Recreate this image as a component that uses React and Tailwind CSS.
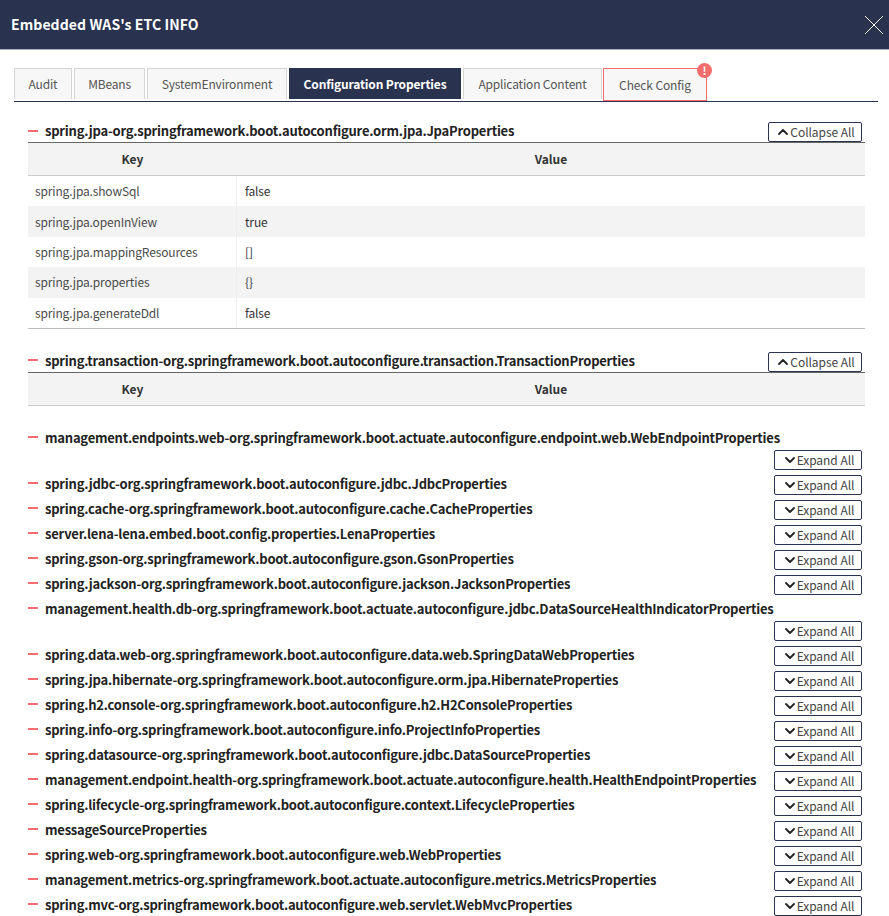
import React from 'react';
import { ChevronDown, ChevronUp } from 'lucide-react';

const tabs = [
    { label: 'Audit', width: 'w-[58px]' },
    { label: 'MBeans', width: 'w-[71px]' },
    { label: 'SystemEnvironment', width: 'w-[140px]' },
    { label: 'Configuration Properties', width: 'w-[172px]', active: true },
    { label: 'Application Content', width: 'w-[139px]' },
];

const jpaRows = [
    ['spring.jpa.showSql', 'false'],
    ['spring.jpa.openInView', 'true'],
    ['spring.jpa.mappingResources', '[]'],
    ['spring.jpa.properties', '{}'],
    ['spring.jpa.generateDdl', 'false'],
];

const collapsed = [
    'management.endpoints.web-org.springframework.boot.actuate.autoconfigure.endpoint.web.WebEndpointProperties',
    'spring.jdbc-org.springframework.boot.autoconfigure.jdbc.JdbcProperties',
    'spring.cache-org.springframework.boot.autoconfigure.cache.CacheProperties',
    'server.lena-lena.embed.boot.config.properties.LenaProperties',
    'spring.gson-org.springframework.boot.autoconfigure.gson.GsonProperties',
    'spring.jackson-org.springframework.boot.autoconfigure.jackson.JacksonProperties',
    'management.health.db-org.springframework.boot.actuate.autoconfigure.jdbc.DataSourceHealthIndicatorProperties',
    'spring.data.web-org.springframework.boot.autoconfigure.data.web.SpringDataWebProperties',
    'spring.jpa.hibernate-org.springframework.boot.autoconfigure.orm.jpa.HibernateProperties',
    'spring.h2.console-org.springframework.boot.autoconfigure.h2.H2ConsoleProperties',
    'spring.info-org.springframework.boot.autoconfigure.info.ProjectInfoProperties',
    'spring.datasource-org.springframework.boot.autoconfigure.jdbc.DataSourceProperties',
    'management.endpoint.health-org.springframework.boot.actuate.autoconfigure.health.HealthEndpointProperties',
    'spring.lifecycle-org.springframework.boot.autoconfigure.context.LifecycleProperties',
    'messageSourceProperties',
    'spring.web-org.springframework.boot.autoconfigure.web.WebProperties',
    'management.metrics-org.springframework.boot.actuate.autoconfigure.metrics.MetricsProperties',
    'spring.mvc-org.springframework.boot.autoconfigure.web.servlet.WebMvcProperties',
];

const SectionHead = ({ title, open }) => (
    <div className="flex flex-wrap items-start justify-between pr-[3px]">
        <h3 className="mr-[4px] flex h-[21px] items-center text-[13px] font-bold tracking-[-0.22px] text-[#222]">
            <span className="mr-[7px] h-[2px] w-[10px] bg-[#f56c6c]" />
            {title}
        </h3>
        <button
            className={`relative z-10 ml-auto flex h-[20px] items-center justify-center rounded-[2px] border border-[#2a3350] bg-white text-[12px] tracking-[-0.05px] text-[#444] ${open ? 'mt-[2px] w-[94px]' : 'mt-[2.5px] w-[88px]'}`}
        >
            {open ? (
                <ChevronUp size={16} strokeWidth={2.75} color="#222" className="-mr-[1px]" />
            ) : (
                <ChevronDown size={16} strokeWidth={2.75} color="#222" className="-mr-[1px]" />
            )}
            {open ? 'Collapse All' : 'Expand All'}
        </button>
    </div>
);

const TableHead = () => (
    <div className="flex h-[34px] items-center border-t border-b border-t-[#666] border-b-[#ccc] bg-[#f3f3f3] text-[12px] font-bold text-[#333]">
        <div className="w-[209px] text-center">Key</div>
        <div className="flex-1 text-center">Value</div>
    </div>
);

const App = () => {
    return (
        <div className="w-[889px] h-[916px] overflow-hidden bg-white font-['Noto_Sans_CJK_KR','Noto_Sans',sans-serif]">
            <header className="flex h-[50px] items-center justify-between border-b border-[#aab] bg-[#29324f] pl-[11px] pr-[5px]">
                <h1 className="text-[14px] font-bold tracking-[0.09px] text-white">Embedded WAS's ETC INFO</h1>
                <svg width="20" height="20" viewBox="0 0 20 20" className="mt-[1px]" stroke="white" strokeWidth="1" fill="none">
                    <path d="M1 1 L19 19 M19 1 L1 19" />
                </svg>
            </header>

            <div className="pl-[14px] pr-[11px] pt-[18px]">
                <div className="flex h-[34px] gap-[2px] border-b border-[#29324f]">
                    {tabs.map((t) => (
                        <div
                            key={t.label}
                            className={
                                t.active
                                    ? `flex h-[31px] items-center justify-center bg-[#29324f] text-[12px] font-bold tracking-[-0.15px] text-white ${t.width}`
                                    : `flex h-[31px] items-center justify-center border border-[#d5d5d5] border-b-0 bg-[#f7f7f7] text-[12px] tracking-[-0.18px] text-[#555] ${t.width}`
                            }
                        >
                            {t.label}
                        </div>
                    ))}
                    <div className="relative -ml-[1px] flex h-[33px] w-[104px] items-center justify-center border border-[#f56c6c] bg-[#f7f7f7] text-[12px] tracking-[-0.12px] text-[#555]">
                        Check Config
                        <span className="absolute -top-[6px] -right-[6px] flex h-[15px] w-[15px] items-center justify-center rounded-full bg-[#f56c6c] text-[11px] font-bold leading-none text-white">
                            !
                        </span>
                    </div>
                </div>

                <div className="pl-[14px] pt-[18px] pr-[13px]">
                    <SectionHead title="spring.jpa-org.springframework.boot.autoconfigure.orm.jpa.JpaProperties" open />
                    <TableHead />
                    {jpaRows.map(([k, v], i) => (
                        <div key={k} className={`flex h-[30.4px] items-center text-[12px] tracking-[-0.15px] text-[#4a4a4a] ${i % 2 === 1 ? 'bg-[#f3f3f3]' : ''}`}>
                            <div className="flex h-full w-[209px] items-center border-r border-[#eee] pl-[7px]">{k}</div>
                            <div className="pl-[8px] text-[#333]">{v}</div>
                        </div>
                    ))}
                    <div className="mb-[21px] border-t border-[#bbb]" />

                    <SectionHead title="spring.transaction-org.springframework.boot.autoconfigure.transaction.TransactionProperties" open />
                    <TableHead />
                    <div className="h-[21px]" />

                    {collapsed.map((c) => (
                        <div key={c} className="mb-[2.5px]">
                            <SectionHead title={c} />
                        </div>
                    ))}
                </div>
            </div>
        </div>
    );
};

export default App;
